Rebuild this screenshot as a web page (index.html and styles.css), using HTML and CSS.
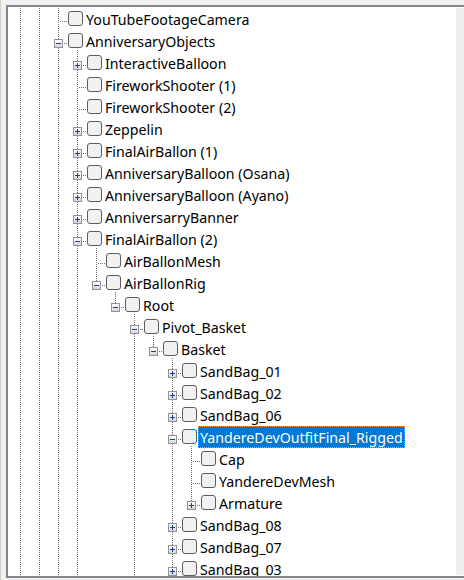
FILE: index.html
```html
<!DOCTYPE html>
<html>
<head>
<meta charset="utf-8">
<link rel="stylesheet" href="styles.css">
</head>
<body>
<div class="tree">
  <div class="list">
    <div class="row"><span class="c v"></span><span class="c v"></span><span class="c t"></span><span class="cbw"><span class="cb"></span></span><span class="lbl">YouTubeFootageCamera</span></div>
    <div class="row"><span class="c v"></span><span class="c v"></span><span class="c t"><i class="exp minus"></i></span><span class="cbw open"><span class="cb"></span></span><span class="lbl">AnniversaryObjects</span></div>
    <div class="row"><span class="c v"></span><span class="c v"></span><span class="c v"></span><span class="c t"><i class="exp plus"></i></span><span class="cbw"><span class="cb"></span></span><span class="lbl">InteractiveBalloon</span></div>
    <div class="row"><span class="c v"></span><span class="c v"></span><span class="c v"></span><span class="c t"></span><span class="cbw"><span class="cb"></span></span><span class="lbl">FireworkShooter (1)</span></div>
    <div class="row"><span class="c v"></span><span class="c v"></span><span class="c v"></span><span class="c t"></span><span class="cbw"><span class="cb"></span></span><span class="lbl">FireworkShooter (2)</span></div>
    <div class="row"><span class="c v"></span><span class="c v"></span><span class="c v"></span><span class="c t"><i class="exp plus"></i></span><span class="cbw"><span class="cb"></span></span><span class="lbl">Zeppelin</span></div>
    <div class="row"><span class="c v"></span><span class="c v"></span><span class="c v"></span><span class="c t"><i class="exp plus"></i></span><span class="cbw"><span class="cb"></span></span><span class="lbl">FinalAirBallon (1)</span></div>
    <div class="row"><span class="c v"></span><span class="c v"></span><span class="c v"></span><span class="c t"><i class="exp plus"></i></span><span class="cbw"><span class="cb"></span></span><span class="lbl">AnniversaryBalloon (Osana)</span></div>
    <div class="row"><span class="c v"></span><span class="c v"></span><span class="c v"></span><span class="c t"><i class="exp plus"></i></span><span class="cbw"><span class="cb"></span></span><span class="lbl">AnniversaryBalloon (Ayano)</span></div>
    <div class="row"><span class="c v"></span><span class="c v"></span><span class="c v"></span><span class="c t"><i class="exp plus"></i></span><span class="cbw"><span class="cb"></span></span><span class="lbl">AnniversarryBanner</span></div>
    <div class="row"><span class="c v"></span><span class="c v"></span><span class="c v"></span><span class="c t"><i class="exp minus"></i></span><span class="cbw open"><span class="cb"></span></span><span class="lbl">FinalAirBallon (2)</span></div>
    <div class="row"><span class="c v"></span><span class="c v"></span><span class="c v"></span><span class="c v"></span><span class="c t"></span><span class="cbw"><span class="cb"></span></span><span class="lbl">AirBallonMesh</span></div>
    <div class="row"><span class="c v"></span><span class="c v"></span><span class="c v"></span><span class="c v"></span><span class="c l"><i class="exp minus"></i></span><span class="cbw open"><span class="cb"></span></span><span class="lbl">AirBallonRig</span></div>
    <div class="row"><span class="c v"></span><span class="c v"></span><span class="c v"></span><span class="c v"></span><span class="c"></span><span class="c l"><i class="exp minus"></i></span><span class="cbw open"><span class="cb"></span></span><span class="lbl">Root</span></div>
    <div class="row"><span class="c v"></span><span class="c v"></span><span class="c v"></span><span class="c v"></span><span class="c"></span><span class="c"></span><span class="c t"><i class="exp minus"></i></span><span class="cbw open"><span class="cb"></span></span><span class="lbl">Pivot_Basket</span></div>
    <div class="row"><span class="c v"></span><span class="c v"></span><span class="c v"></span><span class="c v"></span><span class="c"></span><span class="c"></span><span class="c v"></span><span class="c l"><i class="exp minus"></i></span><span class="cbw open"><span class="cb"></span></span><span class="lbl">Basket</span></div>
    <div class="row"><span class="c v"></span><span class="c v"></span><span class="c v"></span><span class="c v"></span><span class="c"></span><span class="c"></span><span class="c v"></span><span class="c"></span><span class="c t"><i class="exp plus"></i></span><span class="cbw"><span class="cb"></span></span><span class="lbl">SandBag_01</span></div>
    <div class="row"><span class="c v"></span><span class="c v"></span><span class="c v"></span><span class="c v"></span><span class="c"></span><span class="c"></span><span class="c v"></span><span class="c"></span><span class="c t"><i class="exp plus"></i></span><span class="cbw"><span class="cb"></span></span><span class="lbl">SandBag_02</span></div>
    <div class="row"><span class="c v"></span><span class="c v"></span><span class="c v"></span><span class="c v"></span><span class="c"></span><span class="c"></span><span class="c v"></span><span class="c"></span><span class="c t"><i class="exp plus"></i></span><span class="cbw"><span class="cb"></span></span><span class="lbl">SandBag_06</span></div>
    <div class="row"><span class="c v"></span><span class="c v"></span><span class="c v"></span><span class="c v"></span><span class="c"></span><span class="c"></span><span class="c v"></span><span class="c"></span><span class="c t"><i class="exp minus"></i></span><span class="cbw open"><span class="cb"></span></span><span class="lbl sel">YandereDevOutfitFinal_Rigged</span></div>
    <div class="row"><span class="c v"></span><span class="c v"></span><span class="c v"></span><span class="c v"></span><span class="c"></span><span class="c"></span><span class="c v"></span><span class="c"></span><span class="c v"></span><span class="c t"></span><span class="cbw"><span class="cb"></span></span><span class="lbl">Cap</span></div>
    <div class="row"><span class="c v"></span><span class="c v"></span><span class="c v"></span><span class="c v"></span><span class="c"></span><span class="c"></span><span class="c v"></span><span class="c"></span><span class="c v"></span><span class="c t"></span><span class="cbw"><span class="cb"></span></span><span class="lbl">YandereDevMesh</span></div>
    <div class="row"><span class="c v"></span><span class="c v"></span><span class="c v"></span><span class="c v"></span><span class="c"></span><span class="c"></span><span class="c v"></span><span class="c"></span><span class="c v"></span><span class="c l"><i class="exp plus"></i></span><span class="cbw"><span class="cb"></span></span><span class="lbl">Armature</span></div>
    <div class="row"><span class="c v"></span><span class="c v"></span><span class="c v"></span><span class="c v"></span><span class="c"></span><span class="c"></span><span class="c v"></span><span class="c"></span><span class="c t"><i class="exp plus"></i></span><span class="cbw"><span class="cb"></span></span><span class="lbl">SandBag_08</span></div>
    <div class="row"><span class="c v"></span><span class="c v"></span><span class="c v"></span><span class="c v"></span><span class="c"></span><span class="c"></span><span class="c v"></span><span class="c"></span><span class="c t"><i class="exp plus"></i></span><span class="cbw"><span class="cb"></span></span><span class="lbl">SandBag_07</span></div>
    <div class="row"><span class="c v"></span><span class="c v"></span><span class="c v"></span><span class="c v"></span><span class="c"></span><span class="c"></span><span class="c v"></span><span class="c"></span><span class="c t"><i class="exp plus"></i></span><span class="cbw"><span class="cb"></span></span><span class="lbl">SandBag_03</span></div>
  </div>
  <div class="vscroll"></div>
</div>
</body>
</html>
```

FILE: styles.css
```css
html, body {
  margin: 0;
  padding: 0;
  height: 100%;
  overflow: hidden;
  background: #f0f0f0;
}

body {
  border-left: 1px solid #d2cec6;
  box-sizing: border-box;
}

.tree {
  display: flex;
  box-sizing: content-box;
  margin: 5px 0 0 5px;
  width: 458px;
  height: 569px;
  border: 2px solid #82868c;
  background: #fff;
  font-family: "Noto Sans", "Open Sans", sans-serif;
  font-size: 14.2px;
  color: #000;
}

.list {
  flex: 1;
  padding-top: 1px;
  overflow: hidden;
}

.vscroll {
  flex: none;
  width: 8px;
  margin: 1px 2px 1px 0;
  background: #eeeeee;
}

.row {
  display: flex;
  height: 22px;
  padding-left: 3px;
}

.c {
  flex: none;
  width: 19px;
  height: 22px;
  background-repeat: no-repeat;
}

.c.v {
  background-image: repeating-linear-gradient(to bottom, #6f6f6f 0 1px, transparent 1px 2px);
  background-position: 9px 0;
  background-size: 1px 22px;
}

.c.t {
  background-image:
    repeating-linear-gradient(to bottom, #6f6f6f 0 1px, transparent 1px 2px),
    repeating-linear-gradient(to right, #6f6f6f 0 1px, transparent 1px 2px);
  background-position: 9px 0, 11px 13px;
  background-size: 1px 22px, 8px 1px;
}

.c.l {
  background-image:
    repeating-linear-gradient(to bottom, #6f6f6f 0 1px, transparent 1px 2px),
    repeating-linear-gradient(to right, #6f6f6f 0 1px, transparent 1px 2px);
  background-position: 9px 0, 11px 13px;
  background-size: 1px 14px, 8px 1px;
}

.exp {
  display: block;
  box-sizing: border-box;
  width: 9px;
  height: 9px;
  margin: 9px 0 0 5px;
  border: 1px solid #939393;
  background-repeat: no-repeat;
}

.exp.minus {
  background-image:
    linear-gradient(#1e3f92, #1e3f92),
    linear-gradient(to bottom, #ffffff, #d6d6d6);
  background-position: 1px 3px, 0 0;
  background-size: 5px 1px, 100% 100%;
}

.exp.plus {
  background-image:
    linear-gradient(#1e3f92, #1e3f92),
    linear-gradient(#1e3f92, #1e3f92),
    linear-gradient(to bottom, #ffffff, #d6d6d6);
  background-position: 1px 3px, 3px 1px, 0 0;
  background-size: 5px 1px, 1px 5px, 100% 100%;
}

.cbw {
  flex: none;
  width: 16px;
  height: 22px;
  background-repeat: no-repeat;
}

.cbw.open {
  background-image: repeating-linear-gradient(to bottom, #6f6f6f 0 1px, transparent 1px 2px);
  background-position: 9px 20px;
  background-size: 1px 2px;
}

.cb {
  display: block;
  box-sizing: border-box;
  width: 15px;
  height: 15px;
  margin-top: 3px;
  border: 1px solid #5c5c5c;
  border-radius: 3px;
  background: #f1f1f1;
}

.lbl {
  flex: none;
  box-sizing: border-box;
  height: 22px;
  padding: 1px 1px 0;
  line-height: 19px;
  border: 1px solid transparent;
  white-space: nowrap;
}

.lbl.sel {
  background: #0078d7;
  color: #fff;
  border: 1px dotted #ff9a3c;
}
```
